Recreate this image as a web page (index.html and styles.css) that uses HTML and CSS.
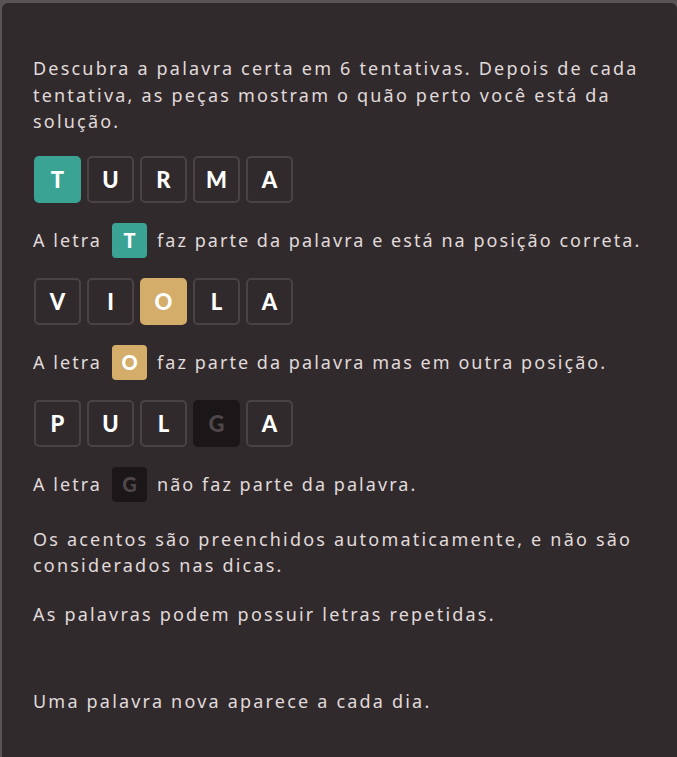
FILE: index.html
```html
<!DOCTYPE html>
<html lang="pt">
<head>
<meta charset="utf-8">
<title>Como jogar</title>
<link rel="stylesheet" href="styles.css">
</head>
<body>
<div class="card">
  <p class="text intro">Descubra a palavra certa em 6 tentativas. Depois de cada tentativa, as peças mostram o quão perto você está da solução.</p>

  <div class="row first">
    <span class="tile right">T</span>
    <span class="tile">U</span>
    <span class="tile">R</span>
    <span class="tile">M</span>
    <span class="tile">A</span>
  </div>
  <p class="hint">A letra <span class="mini right">T</span> faz parte da palavra e está na posição correta.</p>

  <div class="row">
    <span class="tile">V</span>
    <span class="tile">I</span>
    <span class="tile place">O</span>
    <span class="tile">L</span>
    <span class="tile">A</span>
  </div>
  <p class="hint">A letra <span class="mini place">O</span> faz parte da palavra mas em outra posição.</p>

  <div class="row">
    <span class="tile">P</span>
    <span class="tile">U</span>
    <span class="tile">L</span>
    <span class="tile wrong">G</span>
    <span class="tile">A</span>
  </div>
  <p class="hint">A letra <span class="mini wrong">G</span> não faz parte da palavra.</p>

  <p class="text accents">Os acentos são preenchidos automaticamente, e não são considerados nas dicas.</p>
  <p class="text repeat">As palavras podem possuir letras repetidas.</p>
  <p class="text daily">Uma palavra nova aparece a cada dia.</p>
</div>
</body>
</html>
```

FILE: styles.css
```css
html, body {
  margin: 0;
  padding: 0;
  height: 100%;
  overflow: hidden;
}
body {
  background: #5a5355;
  font-family: "Noto Sans", "Open Sans", sans-serif;
  color: #e0dadb;
}
.card {
  margin: 3px 0 0 2px;
  background: #312a2c;
  border-radius: 6px 6px 0 0;
  min-height: 760px;
  padding: 52px 18px 0 31px;
  box-sizing: border-box;
}
.text {
  margin: 0;
  font-size: 18px;
  line-height: 26.5px;
  letter-spacing: 2.2px;
}
.row {
  display: flex;
  gap: 6px;
  margin-top: 20px;
  padding-left: 1px;
}
.row.first {
  margin-top: 21px;
}
.tile {
  box-sizing: border-box;
  width: 47px;
  height: 47px;
  border: 2px solid #4a4345;
  border-radius: 5px;
  display: flex;
  align-items: center;
  justify-content: center;
  font-family: "Lato", sans-serif;
  font-weight: 900;
  font-size: 22px;
  color: #ffffff;
}
.tile.right { background: #3aa394; border-color: #3aa394; }
.tile.place { background: #d3ad69; border-color: #d3ad69; }
.tile.wrong { background: #1b1718; border-color: #1b1718; color: #4e4649; }
.hint {
  margin: 20px 0 0 0;
  display: flex;
  align-items: center;
  white-space: nowrap;
  font-size: 18px;
  letter-spacing: 2.05px;
  height: 35px;
}
.mini {
  box-sizing: border-box;
  width: 35px;
  height: 35px;
  border-radius: 4px;
  margin: 0 10px 0 10px;
  display: flex;
  align-items: center;
  justify-content: center;
  font-family: "Lato", sans-serif;
  font-weight: 900;
  font-size: 20px;
  color: #ffffff;
  letter-spacing: 0;
}
.mini.right { background: #3aa394; }
.mini.place { background: #d3ad69; }
.mini.wrong { background: #1b1718; color: #4e4649; }
.accents { margin-top: 24px; }
.repeat { margin-top: 22px; }
.daily { margin-top: 61px; }
```
